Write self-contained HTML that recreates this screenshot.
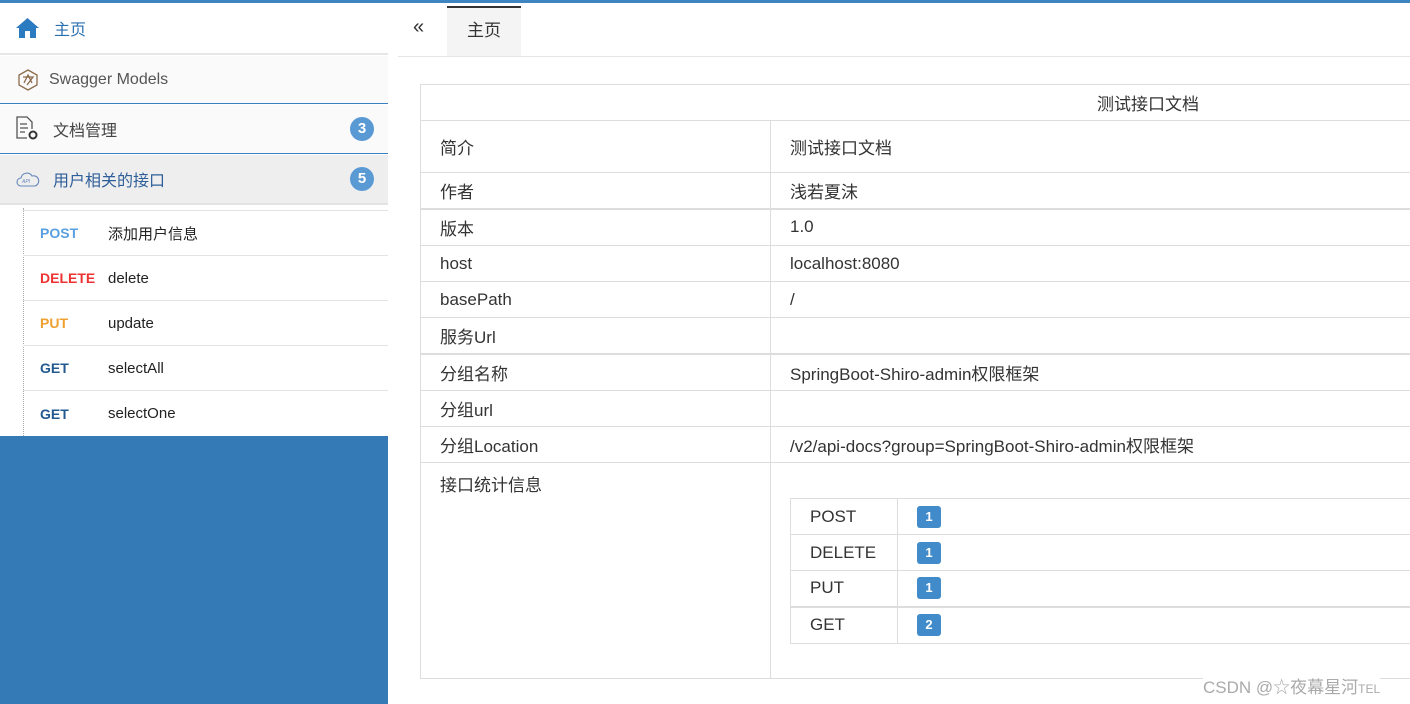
<!DOCTYPE html><html><head><meta charset="utf-8"><style>
*{margin:0;padding:0;box-sizing:border-box}
body{width:1410px;height:704px;overflow:hidden;background:#fff;font-family:"Liberation Sans","Noto Sans CJK SC",sans-serif;position:relative;color:#333}
.a{position:absolute}
.top{left:0;top:0;width:1410px;height:3px;background:#3e84c0}
.side{left:0;top:3px;width:388px;height:701px;background:#337ab7}
.sw{left:0;top:3px;width:388px;height:433px;background:#fff}
.item{left:0;width:388px;font-size:16px;display:flex;align-items:center}
.badge{position:absolute;right:14px;width:24px;height:24px;border-radius:12px;background:#5a9ad4;color:#fff;font-weight:bold;font-size:15px;text-align:center;line-height:24px}
.api{left:23px;width:365px;height:45px;border-top:1px solid #e3e3e3;font-size:15px;display:flex;align-items:center;color:#222}
.api b{display:inline-block;flex-shrink:0;width:85px;padding-left:17px;font-size:14px}
table{border-collapse:collapse;font-size:17px;color:#333;table-layout:fixed}
td{border:1px solid #ddd;padding:0 19px;white-space:nowrap;overflow:hidden}
.bd{display:inline-block;width:24px;height:22px;background:#428bca;color:#fff;border-radius:3px;font-weight:bold;font-size:13px;text-align:center;line-height:22px}
</style></head><body>
<div class="a side"></div><div class="a sw"></div>
<div class="a top"></div>
<div class="a item" style="top:3px;height:52px;color:#2a6fb0;border-bottom:2px solid #e6e6e6">
<svg style="margin-left:16px" width="23" height="20" viewBox="0 0 23 20"><path d="M11.5 0L0 10h3v10h6v-7h5v7h6V10h3z" fill="#2b7bc0"/></svg><span style="margin-left:15px">主页</span></div>
<div class="a item" style="top:56px;height:48px;background:#fafafa;border-bottom:1px solid #3a7fc0;color:#555"><svg style="margin-left:17px" width="22" height="22" viewBox="0 0 22 22" fill="none" stroke="#8a6a4a" stroke-width="1.3"><path d="M11 1l9 5v10l-9 5-9-5V6z"/><path d="M6 8h10l-6 8M7 14l4-8 4 8"/></svg><span style="margin-left:10px">Swagger Models</span></div>
<div class="a item" style="top:105px;height:49px;background:#fafafa;border-bottom:1px solid #3a7fc0;color:#444"><svg style="margin-left:16px" width="24" height="26" viewBox="0 0 24 26" fill="none" stroke="#555" stroke-width="1.3"><path d="M11 22H1V1h10l5 5v7"/><path d="M4 8h7M4 12h8M4 16h5"/><circle cx="17" cy="19" r="3.5" stroke="#333" stroke-width="2"/></svg><span style="margin-left:13px">文档管理</span><div class="badge">3</div></div>
<div class="a item" style="top:155px;height:50px;background:#eee;border-bottom:2px solid #e3e3e3;color:#2f5f9a"><svg style="margin-left:16px" width="24" height="16" viewBox="0 0 24 16" fill="none" stroke="#6688bb" stroke-width="1.1"><path d="M5 15a4 4 0 010-8 6 6 0 0111-2 4 4 0 013 10z"/><text x="6" y="12" font-size="5" fill="#6688bb" stroke="none" font-style="italic">API</text></svg><span style="margin-left:13px">用户相关的接口</span><div class="badge">5</div></div>
<div class="a" style="left:23px;top:208px;height:228px;border-left:1px dotted #aaa"></div>
<div class="a api" style="top:210px"><b style="color:#5aa0e0">POST</b>添加用户信息</div>
<div class="a api" style="top:255px"><b style="color:#e33">DELETE</b>delete</div>
<div class="a api" style="top:300px"><b style="color:#f0a030">PUT</b>update</div>
<div class="a api" style="top:345px"><b style="color:#225a90">GET</b>selectAll</div>
<div class="a api" style="top:390px;height:46px"><b style="color:#225a90">GET</b>selectOne</div>
<div class="a" style="left:398px;top:56px;width:1012px;height:1px;background:#e6e6e6"></div>
<div class="a" style="left:413px;top:16px;font-size:20px;color:#333">«</div>
<div class="a" style="left:447px;top:6px;width:74px;height:50px;background:#f4f4f4;border-top:2px solid #333;font-size:17px;text-align:center;line-height:46px">主页</div>
<table class="a" style="left:420px;top:84px;width:1456px">
<colgroup><col style="width:350px"><col></colgroup>
<tr style="height:36px"><td colspan="2" style="text-align:center">测试接口文档</td></tr>
<tr style="height:52px"><td>简介</td><td>测试接口文档</td></tr>
<tr style="height:36px"><td>作者</td><td>浅若夏沫</td></tr>
<tr style="height:37px;border-top:2px solid #ddd"><td>版本</td><td>1.0</td></tr>
<tr style="height:36px"><td>host</td><td>localhost:8080</td></tr>
<tr style="height:36px"><td>basePath</td><td>/</td></tr>
<tr style="height:36px"><td>服务Url</td><td></td></tr>
<tr style="height:37px;border-top:2px solid #ddd"><td>分组名称</td><td>SpringBoot-Shiro-admin权限框架</td></tr>
<tr style="height:36px"><td>分组url</td><td></td></tr>
<tr style="height:36px"><td>分组Location</td><td>/v2/api-docs?group=SpringBoot-Shiro-admin权限框架</td></tr>
<tr style="height:216px"><td style="vertical-align:top;padding-top:8px">接口统计信息</td><td style="vertical-align:top;padding-top:35px">
<table style="width:700px">
<colgroup><col style="width:107px"><col></colgroup>
<tr style="height:36px"><td>POST</td><td><span class="bd">1</span></td></tr>
<tr style="height:36px"><td>DELETE</td><td><span class="bd">1</span></td></tr>
<tr style="height:36px"><td>PUT</td><td><span class="bd">1</span></td></tr>
<tr style="height:37px;border-top:2px solid #ddd"><td>GET</td><td><span class="bd">2</span></td></tr>
</table></td></tr>
</table>
<div class="a" style="left:1203px;top:673px;font-size:17px;color:#aaa;background:#fff">CSDN @☆夜幕星河<span style="font-size:12px">TEL</span></div>
</body></html>
